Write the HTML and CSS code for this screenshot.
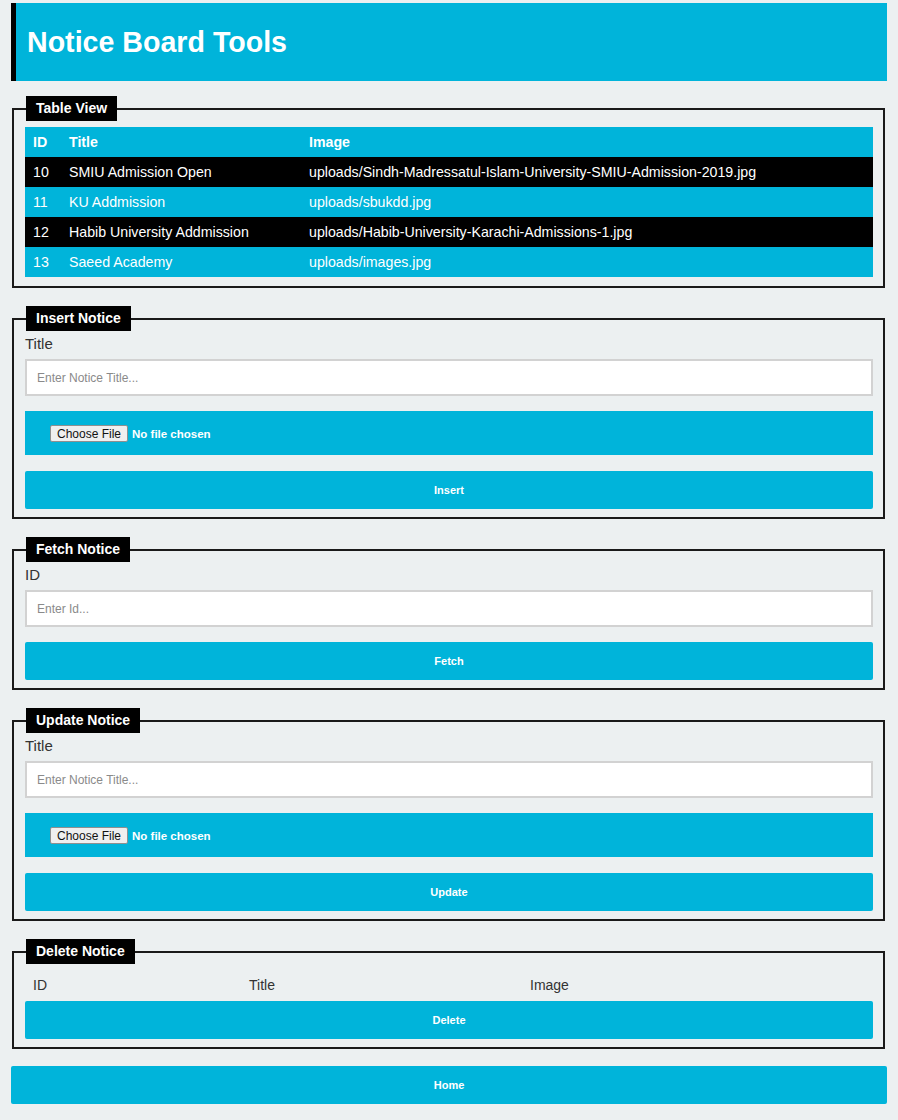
FILE: index.html
```html
<!DOCTYPE html>
<html>
<head>
<meta charset="utf-8">
<title>Notice Board Tools</title>
<link rel="stylesheet" href="styles.css">
</head>
<body>
<div class="page">
  <header class="header"><h1>Notice Board Tools</h1></header>

  <fieldset class="box first">
    <legend>Table View</legend>
    <table class="grid">
      <colgroup><col class="c-id"><col class="c-title"><col></colgroup>
      <thead>
        <tr class="cy"><th>ID</th><th>Title</th><th>Image</th></tr>
      </thead>
      <tbody>
        <tr class="bk"><td>10</td><td>SMIU Admission Open</td><td>uploads/Sindh-Madressatul-Islam-University-SMIU-Admission-2019.jpg</td></tr>
        <tr class="cy"><td>11</td><td>KU Addmission</td><td>uploads/sbukdd.jpg</td></tr>
        <tr class="bk"><td>12</td><td>Habib University Addmission</td><td>uploads/Habib-University-Karachi-Admissions-1.jpg</td></tr>
        <tr class="cy"><td>13</td><td>Saeed Academy</td><td>uploads/images.jpg</td></tr>
      </tbody>
    </table>
  </fieldset>

  <fieldset class="box">
    <legend>Insert Notice</legend>
    <label class="lbl">Title</label>
    <input class="txt" type="text" placeholder="Enter Notice Title...">
    <div class="filebar"><input class="file" type="file"></div>
    <button class="btn">Insert</button>
  </fieldset>

  <fieldset class="box">
    <legend>Fetch Notice</legend>
    <label class="lbl">ID</label>
    <input class="txt" type="text" placeholder="Enter Id...">
    <button class="btn after-input">Fetch</button>
  </fieldset>

  <fieldset class="box">
    <legend>Update Notice</legend>
    <label class="lbl">Title</label>
    <input class="txt" type="text" placeholder="Enter Notice Title...">
    <div class="filebar"><input class="file" type="file"></div>
    <button class="btn">Update</button>
  </fieldset>

  <fieldset class="box">
    <legend>Delete Notice</legend>
    <div class="delrow"><span>ID</span><span>Title</span><span>Image</span></div>
    <button class="btn del">Delete</button>
  </fieldset>

  <button class="btn home">Home</button>
</div>
</body>
</html>
```

FILE: styles.css
```css
* { box-sizing: border-box; }
html, body { margin: 0; padding: 0; background: #ecf0f1; }
body { font-family: "Liberation Sans", Arial, sans-serif; color: #333; }
.page { padding: 3px 11px 20px 11px; }

.header {
  background: #00b4da;
  border-left: 5px solid #000;
  height: 78px;
  display: flex;
  align-items: center;
  padding-left: 11px;
}
.header h1 {
  margin: 0;
  color: #fff;
  font-size: 28.6px;
  font-weight: bold;
}

.box {
  margin: 18px 2px 0 1px;
  border: 2px solid #1a1a1a;
  padding: 4px 10px 8px 11px;
  min-width: 0;
}
.box.first { margin-top: 15px; padding-top: 6px; padding-bottom: 9px; }
.box legend {
  background: #000;
  color: #fff;
  font-weight: bold;
  font-size: 14px;
  line-height: 25px;
  padding: 0 10px;
  margin-left: 1px;
}

.grid {
  width: 100%;
  border-collapse: collapse;
  table-layout: fixed;
  font-size: 14.2px;
  color: #fff;
}
.grid .c-id { width: 36px; }
.grid .c-title { width: 240px; }
.grid th, .grid td {
  height: 30px;
  padding: 0 0 0 8px;
  text-align: left;
  white-space: nowrap;
  overflow: hidden;
}
.grid th { font-weight: bold; }
.grid .cy { background: #00b4da; }
.grid .bk { background: #000; }

.lbl {
  display: block;
  font-size: 15px;
  line-height: 18px;
  color: #333;
}
.txt {
  display: block;
  width: 100%;
  height: 37px;
  margin-top: 6px;
  border: 2px solid #d2d2d2;
  background: #fff;
  padding: 0 10px;
  font-family: "Liberation Sans", Arial, sans-serif;
  font-size: 12px;
  color: #333;
}
.txt::placeholder { color: #8a8a8a; }

.filebar {
  margin-top: 15px;
  height: 44px;
  background: #00b4da;
  display: flex;
  align-items: center;
  padding-left: 25px;
}
.file {
  font-family: "Liberation Sans", Arial, sans-serif;
  font-size: 11.5px;
  font-weight: bold;
  color: #fff;
}
.file::file-selector-button {
  font-family: "Liberation Sans", Arial, sans-serif;
  font-size: 12px;
  font-weight: normal;
  color: #111;
  background: #efefef;
  border: 1px solid #8f8f8f;
  border-radius: 2px;
  padding: 1px 6px;
  margin-right: 4px;
  height: 17px;
}

.btn {
  display: block;
  width: 100%;
  height: 38px;
  margin-top: 16px;
  border: none;
  border-radius: 2px;
  background: #00b4da;
  color: #fff;
  font-family: "Liberation Sans", Arial, sans-serif;
  font-size: 11px;
  font-weight: bold;
}
.btn.after-input { margin-top: 15px; }
.btn.del { margin-top: 0; }
.btn.home { margin-top: 17px; }

.delrow {
  display: grid;
  grid-template-columns: 216px 281px 1fr;
  height: 33px;
  align-items: center;
  font-size: 14px;
  color: #333;
}
.delrow span { padding-left: 8px; padding-top: 1px; }
```
